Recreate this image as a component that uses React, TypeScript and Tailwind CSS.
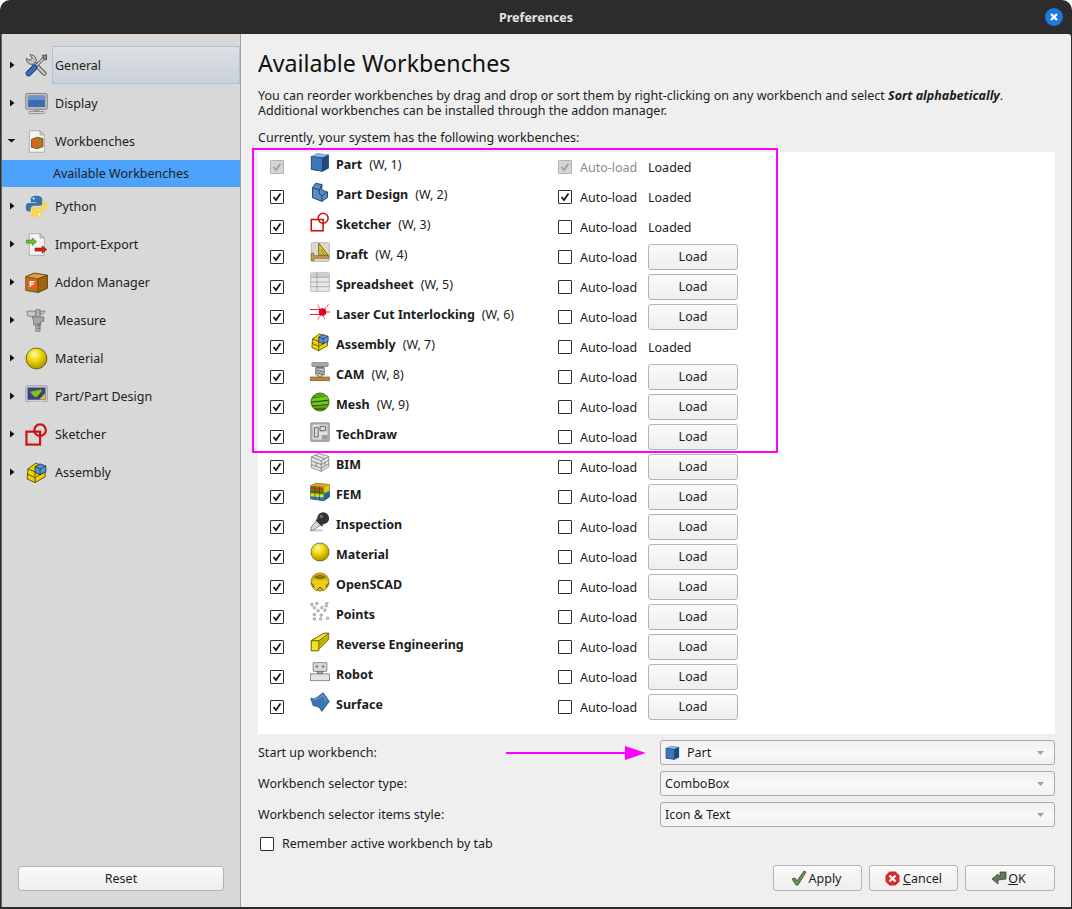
import React from 'react';

const Chevron = () => <svg width="10" height="10" viewBox="0 0 10 10"><path d="M3 1.500 L7.500 5 L3 8.500 Z" fill="#111" /></svg>;
const ChevronDown = () => <svg width="10" height="10" viewBox="0 0 10 10"><path d="M0.500 3 L8.500 3 L4.500 6.500 Z" fill="#111" /></svg>;

const Cube = () => <svg viewBox="0 0 32 32" className="w-full h-full">
  <path d="M2 7 L11 2 L30 4 L30 26 L20 31 L2 28 Z" fill="#2f65a5" />
  <path d="M2 7 L11 2 L30 4 L20 9 Z" fill="#8fb3d9" />
  <path d="M20 9 L30 4 L30 26 L20 31 Z" fill="#1f4a80" />
  <path d="M2 7 L20 9 L20 31 L2 28 Z" fill="#3d77b8" />
  <path d="M2 7 L20 9 L20 31 L2 28 Z" fill="none" stroke="#16335c" strokeWidth="1" />
</svg>;

const PartDesign = () => <svg viewBox="0 0 32 32" className="w-full h-full">
  <path d="M9 2 L19 4 L19 13 L28 16 L28 25 L19 31 L4 25 L4 9 Z" fill="#5a8cc8" stroke="#1d3f6e" strokeWidth="1.500" strokeLinejoin="round" />
  <path d="M4 9 L15 13 L15 19 L19 22 L19 31" fill="none" stroke="#1d3f6e" strokeWidth="1.500" />
  <path d="M15 13 L19 4 M19 22 L28 16" stroke="#1d3f6e" strokeWidth="1.500" />
</svg>;

const Sketcher = ({ w = 3 }: { w?: number }) => <svg viewBox="0 0 32 32" className="w-full h-full">
  <rect x="2" y="12" width="19" height="18" fill="none" stroke="#cc1111" strokeWidth={w} />
  <circle cx="21" cy="10" r="8" fill="none" stroke="#cc1111" strokeWidth={w} />
</svg>;

const Draft = () => <svg viewBox="0 0 32 32" className="w-full h-full">
  <rect x="2" y="1" width="29" height="30" rx="2" fill="#d8d8d0" stroke="#9a9a90" />
  <path d="M14 2 L14 21 L29 21 Z" fill="#e8d020" stroke="#6b5a10" strokeWidth="1.500" />
  <path d="M18 12 L18 18 L23 18 Z" fill="#d8d8d0" stroke="#6b5a10" />
  <path d="M2 18 L6 18 L6 22 L30 22 L30 26 L6 26 L6 30 L2 30 Z" fill="#c9a04a" stroke="#6b5010" />
</svg>;

const Spreadsheet = () => <svg viewBox="0 0 32 32" className="w-full h-full">
  <rect x="1" y="1" width="30" height="30" rx="1.500" fill="#e8e8e6" stroke="#a0a0a0" />
  <rect x="1" y="1" width="30" height="7" fill="#d0d0ce" />
  <path d="M1 8.500 H31 M1 16 H31 M1 23.500 H31 M11 1 V31" stroke="#8c8c88" />
</svg>;

const Laser = () => <svg viewBox="0 0 32 32" className="w-full h-full">
  <path d="M0 12 H16 M0 20 H16 M22 16 H32" stroke="#ee2244" strokeWidth="1.700" />
  <path d="M12 4 L24 28 M30 3 L12 28" stroke="#ee2244" strokeWidth="1.200" />
  <circle cx="20" cy="16" r="6" fill="#dd0022" />
</svg>;

const Assembly = () => <svg viewBox="0 0 32 32" className="w-full h-full">
  <path d="M4 11 L15 3 L28 8 L28 22 L14 30 L3 25 Z" fill="#edd400" stroke="#4a4200" strokeWidth="1.200" />
  <path d="M3 18 L14 23 L28 15 M4 11 L14 15 L14 30" fill="none" stroke="#4a4200" strokeWidth="1.200" />
  <path d="M14 8 L21 4 L29 7 L29 15 L21 19 L14 16 Z" fill="#5b93d0" stroke="#17335c" strokeWidth="1.200" />
  <path d="M14 8 L21 11 L29 7 M21 11 L21 19" fill="none" stroke="#17335c" strokeWidth="1.200" />
</svg>;

const Cam = () => <svg viewBox="0 0 32 32" className="w-full h-full">
  <rect x="3" y="1" width="26" height="6" rx="1" fill="#a8a8a8" stroke="#666" />
  <rect x="9" y="7" width="14" height="3" fill="#777" />
  <path d="M9 10 H23 V20 L16 24 L9 20 Z" fill="#c4c4c0" stroke="#555" />
  <path d="M9 13 L23 16 M9 17 L23 20" stroke="#555" strokeWidth="1.400" />
  <rect x="1" y="24" width="30" height="6" fill="#b8893c" stroke="#6b5010" />
</svg>;

const Mesh = () => <svg viewBox="0 0 32 32" className="w-full h-full">
  <circle cx="16" cy="16" r="14.500" fill="#5aa80a" stroke="#1f3d02" />
  <path d="M3 10 L29 7 M2 16 L30 13 M3 22 L29 20 M8 27 L24 27" stroke="#173002" strokeWidth="1.200" fill="none" />
  <path d="M4 10 L28 6 L29 12 L3 15 Z M4 18 L29 15 L28 19 L5 21 Z" fill="#8ae234" opacity="0.600" />
</svg>;

const TechDraw = () => <svg viewBox="0 0 32 32" className="w-full h-full">
  <rect x="1" y="1" width="30" height="30" rx="1.500" fill="#a8a8a4" stroke="#8a8a86" />
  <rect x="4" y="4" width="24" height="24" fill="#dededa" />
  <path d="M7 9 H13 V24 H7 Z M16 7 H25 V14 H16 Z" fill="none" stroke="#555" strokeWidth="1.400" />
  <rect x="19" y="21" width="9" height="7" fill="#999" />
</svg>;

const Bim = () => <svg viewBox="0 0 32 32" className="w-full h-full">
  <path d="M2 8 L14 2 L30 7 L30 24 L18 31 L2 25 Z" fill="#e4e4e0" stroke="#666" />
  <path d="M2 8 L18 14 L30 7 M18 14 V31 M2 14 L18 20 L30 13 M2 20 L18 26 L30 19 M8 5 L24 11 M10 17 V23 M24 16 V22" fill="none" stroke="#666" strokeWidth="1.100" />
</svg>;

const Fem = () => <svg viewBox="0 0 32 32" className="w-full h-full">
  <path d="M1 6 L10 2 L31 4 L31 24 L22 30 L1 27 Z" fill="#4e9a06" stroke="#333" />
  <path d="M1 6 L10 2 L31 4 L22 8 Z" fill="#e2a020" />
  <path d="M1 8 L22 10 V14 L1 12 Z" fill="#e03020" />
  <path d="M1 18 L22 20 V25 L1 23 Z" fill="#e8d820" />
  <path d="M1 23 L22 25 V30 L1 27 Z" fill="#3070d0" />
  <path d="M22 8 L31 4 V14 L22 18 Z" fill="#e8c020" />
  <path d="M22 20 L31 15 V24 L22 30 Z" fill="#2060b0" />
  <path d="M8 7 V27 M15 8 V28 M1 15 L22 17" stroke="#333" fill="none" />
</svg>;

const Inspection = () => <svg viewBox="0 0 32 32" className="w-full h-full">
  <ellipse cx="11" cy="29.500" rx="10" ry="2" fill="#ccc" />
  <path d="M11 14 L2 24 L1 30 L7 28 L18 20 Z" fill="#d8d8d8" stroke="#666" strokeWidth="1.200" />
  <path d="M10 12 L20 22" stroke="#333" strokeWidth="3.500" />
  <circle cx="21" cy="10" r="9.500" fill="#333" />
  <circle cx="18" cy="7" r="2.500" fill="#777" />
</svg>;

const Material = () => <svg viewBox="0 0 32 32" className="w-full h-full">
  <defs><radialGradient id="mat" cx="0.400" cy="0.300" r="0.750"><stop offset="0" stopColor="#fff8b0" /><stop offset="0.450" stopColor="#edd400" /><stop offset="1" stopColor="#a48c00" /></radialGradient></defs>
  <circle cx="16" cy="16" r="14.500" fill="url(#mat)" stroke="#4a4200" strokeWidth="1" />
</svg>;

const OpenScad = () => <svg viewBox="0 0 32 32" className="w-full h-full">
  <circle cx="16" cy="16" r="14.500" fill="#d4b400" stroke="#5c5000" />
  <path d="M7 7 Q16 2 25 7 L25 9 Q16 14 7 9 Z" fill="#8a7600" />
  <path d="M16 14 Q20 12 24 11 L30 17 Q26 19 25 22 L27 26 L20 29 L16 25 L12 29 L5 26 L7 22 Q6 19 2 17 L8 11 Q12 12 16 14 Z" fill="#e8cd20" />
  <path d="M2 18 Q6 20 6 25 M30 18 Q26 20 26 25 M11 29 L16 24 L21 29" stroke="#5c5000" fill="none" strokeWidth="1.500" />
</svg>;

const Points = () => <svg viewBox="0 0 32 32" className="w-full h-full">
  {[[3, 4], [11, 2], [27, 1], [7, 9], [19, 9], [26, 6], [13, 14], [24, 13], [7, 20], [18, 21], [7, 27], [17, 27], [28, 26]].map(([x, y]) => <circle key={`${x}-${y}`} cx={x} cy={y} r="2" fill="#d8d8d8" stroke="#777" />)}
</svg>;

const Reverse = () => <svg viewBox="0 0 32 32" className="w-full h-full">
  <path d="M2 14 L22 2 L30 2 L30 12 L12 30 L2 30 Z" fill="#c8b000" stroke="#4a4200" />
  <path d="M2 14 L14 14 L30 2 L22 2 Z" fill="#f5e530" stroke="#4a4200" />
  <path d="M2 14 L14 14 V30 H2 Z" fill="#f5e020" stroke="#4a4200" />
</svg>;

const Robot = () => <svg viewBox="0 0 32 32" className="w-full h-full">
  <rect x="5" y="1" width="22" height="14" rx="1" fill="#d8d8d8" stroke="#555" />
  <circle cx="11" cy="7" r="2" fill="#777" /><circle cx="21" cy="7" r="2" fill="#777" />
  <rect x="12" y="15" width="8" height="4" fill="#aaa" stroke="#555" />
  <rect x="1" y="19" width="30" height="11" fill="#e4e4e4" stroke="#555" />
</svg>;

const Surface = () => <svg viewBox="0 0 32 32" className="w-full h-full">
  <path d="M1 10 Q8 12 12 8 L21 1 L31 15 L19 31 L15 25 Q8 21 5 22 Z" fill="#3f73b5" stroke="#1d3f6e" />
  <path d="M4 11 Q10 13 14 10 L21 5 L25 14" fill="none" stroke="#7aa4d6" strokeWidth="1.500" />
</svg>;

const Tools = () => <svg viewBox="0 0 32 32" className="w-full h-full">
  <path d="M10 10 L27 27" stroke="#333" strokeWidth="6" strokeLinecap="round" />
  <path d="M10 10 L27 27" stroke="#bfc3c6" strokeWidth="4" strokeLinecap="round" />
  <path d="M2 6 A7.500 7.500 0 0 0 12 14 L15 11 A7.500 7.500 0 0 0 7 1 L10 6 L7 9 Z" fill="#bfc3c6" stroke="#333" />
  <path d="M12 20 L27 5" stroke="#333" strokeWidth="4" />
  <path d="M12 20 L27 5" stroke="#e0e0e0" strokeWidth="2" />
  <path d="M24 2 L30 1 L30 8 L27 8 Z" fill="#8c9094" stroke="#333" />
  <path d="M5 27 L13 19" stroke="#16335c" strokeWidth="8" strokeLinecap="round" />
  <path d="M5 27 L13 19" stroke="#2f6fbd" strokeWidth="6" strokeLinecap="round" />
</svg>;

const Monitor = () => <svg viewBox="0 0 32 32" className="w-full h-full">
  <rect x="1" y="2" width="30" height="22" rx="2" fill="#c4c4c0" stroke="#666" />
  <rect x="4" y="5" width="24" height="16" fill="#3d6cb0" />
  <rect x="4" y="5" width="24" height="6" fill="#6d94cc" />
  <rect x="12" y="24" width="8" height="3" fill="#999" />
  <rect x="5" y="27" width="22" height="3" rx="1.500" fill="#d8d8d4" stroke="#777" />
</svg>;

const Box = () => <svg viewBox="0 0 32 32" className="w-full h-full">
  <path d="M1 8 L13 3 L31 6 L31 24 L18 30 L1 27 Z" fill="#b5761f" stroke="#5c3a08" />
  <path d="M1 8 L13 3 L31 6 L18 11 Z" fill="#dfa24a" stroke="#5c3a08" />
  <path d="M18 11 L31 6 L31 24 L18 30 Z" fill="#a0640f" stroke="#5c3a08" />
  <rect x="4" y="12" width="11" height="12" rx="1" fill="#f05a22" />
  <path d="M7.500 22 V15 H13 M7.500 18.500 H12" stroke="#fff" strokeWidth="2" fill="none" />
</svg>;

const Doc = ({ children }: { children?: React.ReactNode }) => <svg viewBox="0 0 32 32" className="w-full h-full">
  <path d="M6 1 H21 L27 7 V31 H6 Z" fill="#f4f4f2" stroke="#999" />
  <path d="M21 1 V7 H27 Z" fill="#cfcfcc" stroke="#999" />
  {children}
</svg>;

const Python = () => <svg viewBox="0 0 32 32" className="w-full h-full">
  <path d="M16 1 C9 1 8 4 8 6 V10 H16 V11 H5 C2 11 1 14 1 17 C1 21 3 23 5 23 H8 V19 C8 17 10 15 12 15 H20 C22 15 24 14 24 12 V6 C24 3 21 1 16 1 Z" fill="#3b75a8" />
  <path d="M16 31 C23 31 24 28 24 26 V22 H16 V21 H27 C30 21 31 18 31 15 C31 11 29 9 27 9 H25 V13 C25 15 22 17 20 17 H12 C10 17 8 18 8 20 V26 C8 29 11 31 16 31 Z" fill="#f7d850" />
  <circle cx="12" cy="5" r="1.400" fill="#fff" /><circle cx="20" cy="27" r="1.400" fill="#fff" />
</svg>;

const Caliper = () => <svg viewBox="0 0 32 32" className="w-full h-full">
  <path d="M15 1 H21 V31 H15 Z" fill="#b8b8b4" stroke="#666" />
  <path d="M3 3 H15 V9 L9 11 L3 9 Z" fill="#c8c8c4" stroke="#666" />
  <path d="M10 11 H26 V17 H22 V22 H12 V17 Z" fill="#a8a8a4" stroke="#666" />
  <path d="M21 3 H28 L25 7 H21 Z" fill="#c8c8c4" stroke="#666" />
  <path d="M17 24 H21 M17 27 H21 M17 21 H21" stroke="#555" />
</svg>;

const PartPartDesign = () => <svg viewBox="0 0 32 32" className="w-full h-full">
  <rect x="1" y="1" width="30" height="22" rx="2" fill="#cfd4dc" stroke="#8a8a94" />
  <rect x="3.500" y="3.500" width="25" height="17" fill="#3d3f88" />
  <path d="M6 9 L22 6 L24 8 L17 17 L13 17 Z" fill="#7ec820" stroke="#2c5a06" />
  <path d="M28 11 V20 H20 Z" fill="#e0c420" />
  <path d="M6 23 H26 L24 28 Q16 31 8 28 Z" fill="#d8dade" />
</svg>;

const Dropdown = () => <svg width="7" height="4" viewBox="0 0 7 4"><path d="M0 0 H7 L3.500 4 Z" fill="#a0a0a0" /></svg>;

const treeAfter: { label: string; icon: React.ReactNode }[] = [
  { label: 'Python', icon: <Python /> },
  { label: 'Import-Export', icon: <Doc><path d="M2 10 H10 V7 L16 12 L10 17 V14 H2 Z" fill="#73c030" stroke="#3a7a10" /><path d="M14 21 H24 V18 L30 23 L24 28 V25 H14 Z" fill="#dd1f1f" stroke="#8a0f0f" /></Doc> },
  { label: 'Addon Manager', icon: <Box /> },
  { label: 'Measure', icon: <Caliper /> },
  { label: 'Material', icon: <Material /> },
  { label: 'Part/Part Design', icon: <PartPartDesign /> },
  { label: 'Sketcher', icon: <Sketcher /> },
  { label: 'Assembly', icon: <Assembly /> },
];

const TreeRow = ({ label, icon, open = false, active = false }: { label: string; icon: React.ReactNode; open?: boolean; active?: boolean }) => <div className="h-[38px] flex items-center">
    <div className="w-[23px] pl-[5px] flex items-center">{open ? <ChevronDown /> : <Chevron />}</div>
    <div className="w-[23px] h-[23px] shrink-0 mr-[4px]">{icon}</div>
    <div className={`flex-1 h-full flex items-center pl-[2px] border ${active ? 'bg-gradient-to-b from-[#dde0e4] to-[#c9d0d8] border-[#abc3da]' : 'border-transparent'}`}>{label}</div>
  </div>;

const Check = ({ on, disabled = false }: { on: boolean; disabled?: boolean }) => <div className={`w-[14px] h-[14px] shrink-0 border rounded-[1px] flex items-center justify-center ${disabled ? 'bg-[#d4d4d4] border-[#b4b4b4]' : 'bg-white border-[#2e2e2e]'}`}>
    {on && <svg width="10" height="10" viewBox="0 0 10 10"><path d="M1.500 5 L4 8 L8.500 1.500" fill="none" stroke={disabled ? '#a0a0a0' : '#111'} strokeWidth="1.700" /></svg>}
  </div>;

const Btn = ({ children, className = '' }: { children: React.ReactNode; className?: string }) => <div className={`flex items-center justify-center border border-[#b4b4b4] rounded-[3px] bg-gradient-to-b from-[#fafafa] to-[#eeeeee] ${className}`}>{children}</div>;

const Combo = ({ children }: { children: React.ReactNode }) => <div className="w-[395px] h-[25px] flex items-center justify-between pl-[4px] pr-[10px] border border-[#aaaaaa] rounded-[3px] bg-gradient-to-b from-[#f0f0f0] via-[#f8f8f8] to-[#f2f2f2]">
    <div className="flex items-center">{children}</div>
    <Dropdown />
  </div>;

type Wb = { name: string; code?: string; icon: React.ReactNode; auto?: boolean; loaded?: boolean; disabled?: boolean };

const workbenches: Wb[] = [
  { name: 'Part', code: '(W, 1)', icon: <Cube />, auto: true, loaded: true, disabled: true },
  { name: 'Part Design', code: '(W, 2)', icon: <PartDesign />, auto: true, loaded: true },
  { name: 'Sketcher', code: '(W, 3)', icon: <Sketcher w={2.5} />, loaded: true },
  { name: 'Draft', code: '(W, 4)', icon: <Draft /> },
  { name: 'Spreadsheet', code: '(W, 5)', icon: <Spreadsheet /> },
  { name: 'Laser Cut Interlocking', code: '(W, 6)', icon: <Laser /> },
  { name: 'Assembly', code: '(W, 7)', icon: <Assembly />, loaded: true },
  { name: 'CAM', code: '(W, 8)', icon: <Cam /> },
  { name: 'Mesh', code: '(W, 9)', icon: <Mesh /> },
  { name: 'TechDraw', icon: <TechDraw /> },
  { name: 'BIM', icon: <Bim /> },
  { name: 'FEM', icon: <Fem /> },
  { name: 'Inspection', icon: <Inspection /> },
  { name: 'Material', icon: <Material /> },
  { name: 'OpenSCAD', icon: <OpenScad /> },
  { name: 'Points', icon: <Points /> },
  { name: 'Reverse Engineering', icon: <Reverse /> },
  { name: 'Robot', icon: <Robot /> },
  { name: 'Surface', icon: <Surface /> },
];

const WbRow = ({ wb }: { wb: Wb }) => <div className="h-[30px] flex items-center pl-[12px]">
    <Check on disabled={wb.disabled} />
    <div className="w-[20px] h-[20px] shrink-0 ml-[26px] mb-[10px]">{wb.icon}</div>
    <div className="w-[228px] pl-[6px] mb-[6px] whitespace-nowrap">
      <span className="font-bold">{wb.name}</span>
      {wb.code && <span className="ml-[7px]">{wb.code}</span>}
    </div>
    <Check on={!!wb.auto} disabled={wb.disabled} />
    <div className={`w-[76px] pl-[8px] ${wb.disabled ? 'text-[#8c8c8c]' : ''}`}>Auto-load</div>
    {wb.loaded ? <div>Loaded</div> : <Btn className="w-[90px] h-[26px] pb-[2px]">Load</Btn>}
  </div>;

export default function App() {
  return <div className="relative w-[1072px] h-[909px] flex flex-col bg-[#2c2c2c] rounded-t-[10px] text-[12.5px] leading-[15px] text-[#1c1c1c] font-['Noto_Sans',sans-serif] overflow-hidden">
      <div className="h-[34px] shrink-0 flex items-center justify-center relative text-[#e4e4e4] font-bold">
        Preferences
        <div className="absolute right-[9px] top-[8px] w-[18px] h-[18px] rounded-full bg-[#1a7ae0] flex items-center justify-center">
          <svg width="10" height="10" viewBox="0 0 10 10"><path d="M2 2 L8 8 M8 2 L2 8" stroke="#fff" strokeWidth="2.400" /></svg>
        </div>
      </div>
      <div className="flex-1 flex mx-[1px] mb-[2px] bg-[#efefef] rounded-t-[3px] overflow-hidden">
        <div className="w-[239px] shrink-0 flex flex-col bg-[#d8d8d8] border-l border-[#666]">
          <div className="pt-[12px] flex-1">
            <TreeRow label="General" icon={<Tools />} active />
            <TreeRow label="Display" icon={<Monitor />} />
            <TreeRow label="Workbenches" open icon={<Doc><path d="M9 13 L17 10 L25 12 V23 L17 26 L9 24 Z" fill="#b5761f" stroke="#5c3a08" /><rect x="10" y="15" width="6" height="7" fill="#f05a22" /></Doc>} />
            <div className="h-[27px] flex items-center pl-[51px] bg-[#4da3fc]">Available Workbenches</div>
            {treeAfter.map(s => <TreeRow key={s.label} label={s.label} icon={s.icon} />)}
          </div>
          <div className="px-[16px] pb-[16px]">
            <Btn className="h-[25px]">Reset</Btn>
          </div>
        </div>
        <div className="flex-1 flex flex-col pl-[17px] pr-[16px] border-l border-[#a0a0a0]">
          <div className="text-[23.2px] leading-[30px] mt-[14px] text-[#111]">Available Workbenches</div>
          <div className="mt-[10px] leading-[15px]">
            You can reorder workbenches by drag and drop or sort them by right-clicking on any workbench and select <b><i>Sort alphabetically</i></b>.<br />
            Additional workbenches can be installed through the addon manager.
          </div>
          <div className="mt-[12px]">Currently, your system has the following workbenches:</div>
          <div className="mt-[7px] h-[582px] bg-white">
            {workbenches.map(wb => <WbRow key={wb.name} wb={wb} />)}
          </div>
          <div className="mt-[6px] flex flex-col gap-[6px]">
            <div className="flex items-center justify-between">
              <span>Start up workbench:</span>
              <Combo><span className="w-[15px] h-[15px] mr-[7px]"><Cube /></span>Part</Combo>
            </div>
            <div className="flex items-center justify-between">
              <span>Workbench selector type:</span>
              <Combo>ComboBox</Combo>
            </div>
            <div className="flex items-center justify-between">
              <span>Workbench selector items style:</span>
              <Combo>Icon &amp; Text</Combo>
            </div>
          </div>
          <div className="mt-[9px] flex items-center pl-[2px] gap-[8px]">
            <Check on={false} />
            Remember active workbench by tab
          </div>
          <div className="mt-[14px] flex justify-end gap-[7px]">
            <Btn className="w-[89px] h-[26px] gap-[2px] pr-[3px]">
              <svg width="16" height="16" viewBox="0 0 16 16"><path d="M1 9 L4 8 L6 11 L13 1 L15 2 L7 15 L5 15 Z" fill="#6e8f56" stroke="#2e4a20" strokeWidth="0.800" /></svg>
              Apply
            </Btn>
            <Btn className="w-[89px] h-[26px] gap-[3px]">
              <svg width="15" height="15" viewBox="0 0 15 15"><path d="M4.500 0.500 H10.500 L14.500 4.500 V10.500 L10.500 14.500 H4.500 L0.500 10.500 V4.500 Z" fill="#d8282c" /><path d="M4.500 4.500 L10.500 10.500 M10.500 4.500 L4.500 10.500" stroke="#fff" strokeWidth="2.400" /></svg>
              <span><span className="underline">C</span>ancel</span>
            </Btn>
            <Btn className="w-[90px] h-[26px] gap-[1px] pr-[3px]">
              <svg width="16" height="15" viewBox="0 0 16 15"><path d="M9 1 H15 V8 L7 9 V13 L1 8 L7 3 V5 L9 5 Z" fill="#66785a" stroke="#39472f" strokeWidth="0.800" /></svg>
              <span><span className="underline">O</span>K</span>
            </Btn>
          </div>
        </div>
      </div>
      <div className="absolute left-[252px] top-[148px] w-[526px] h-[305px] border-2 border-[#ff00ff] pointer-events-none" />
      <svg className="absolute left-[506px] top-[745px]" width="140" height="16" viewBox="0 0 140 16"><path d="M0 8 H120" stroke="#ff00ff" strokeWidth="2" /><path d="M119 1 L140 8 L119 15 Z" fill="#ff00ff" /></svg>
    </div>;
}
